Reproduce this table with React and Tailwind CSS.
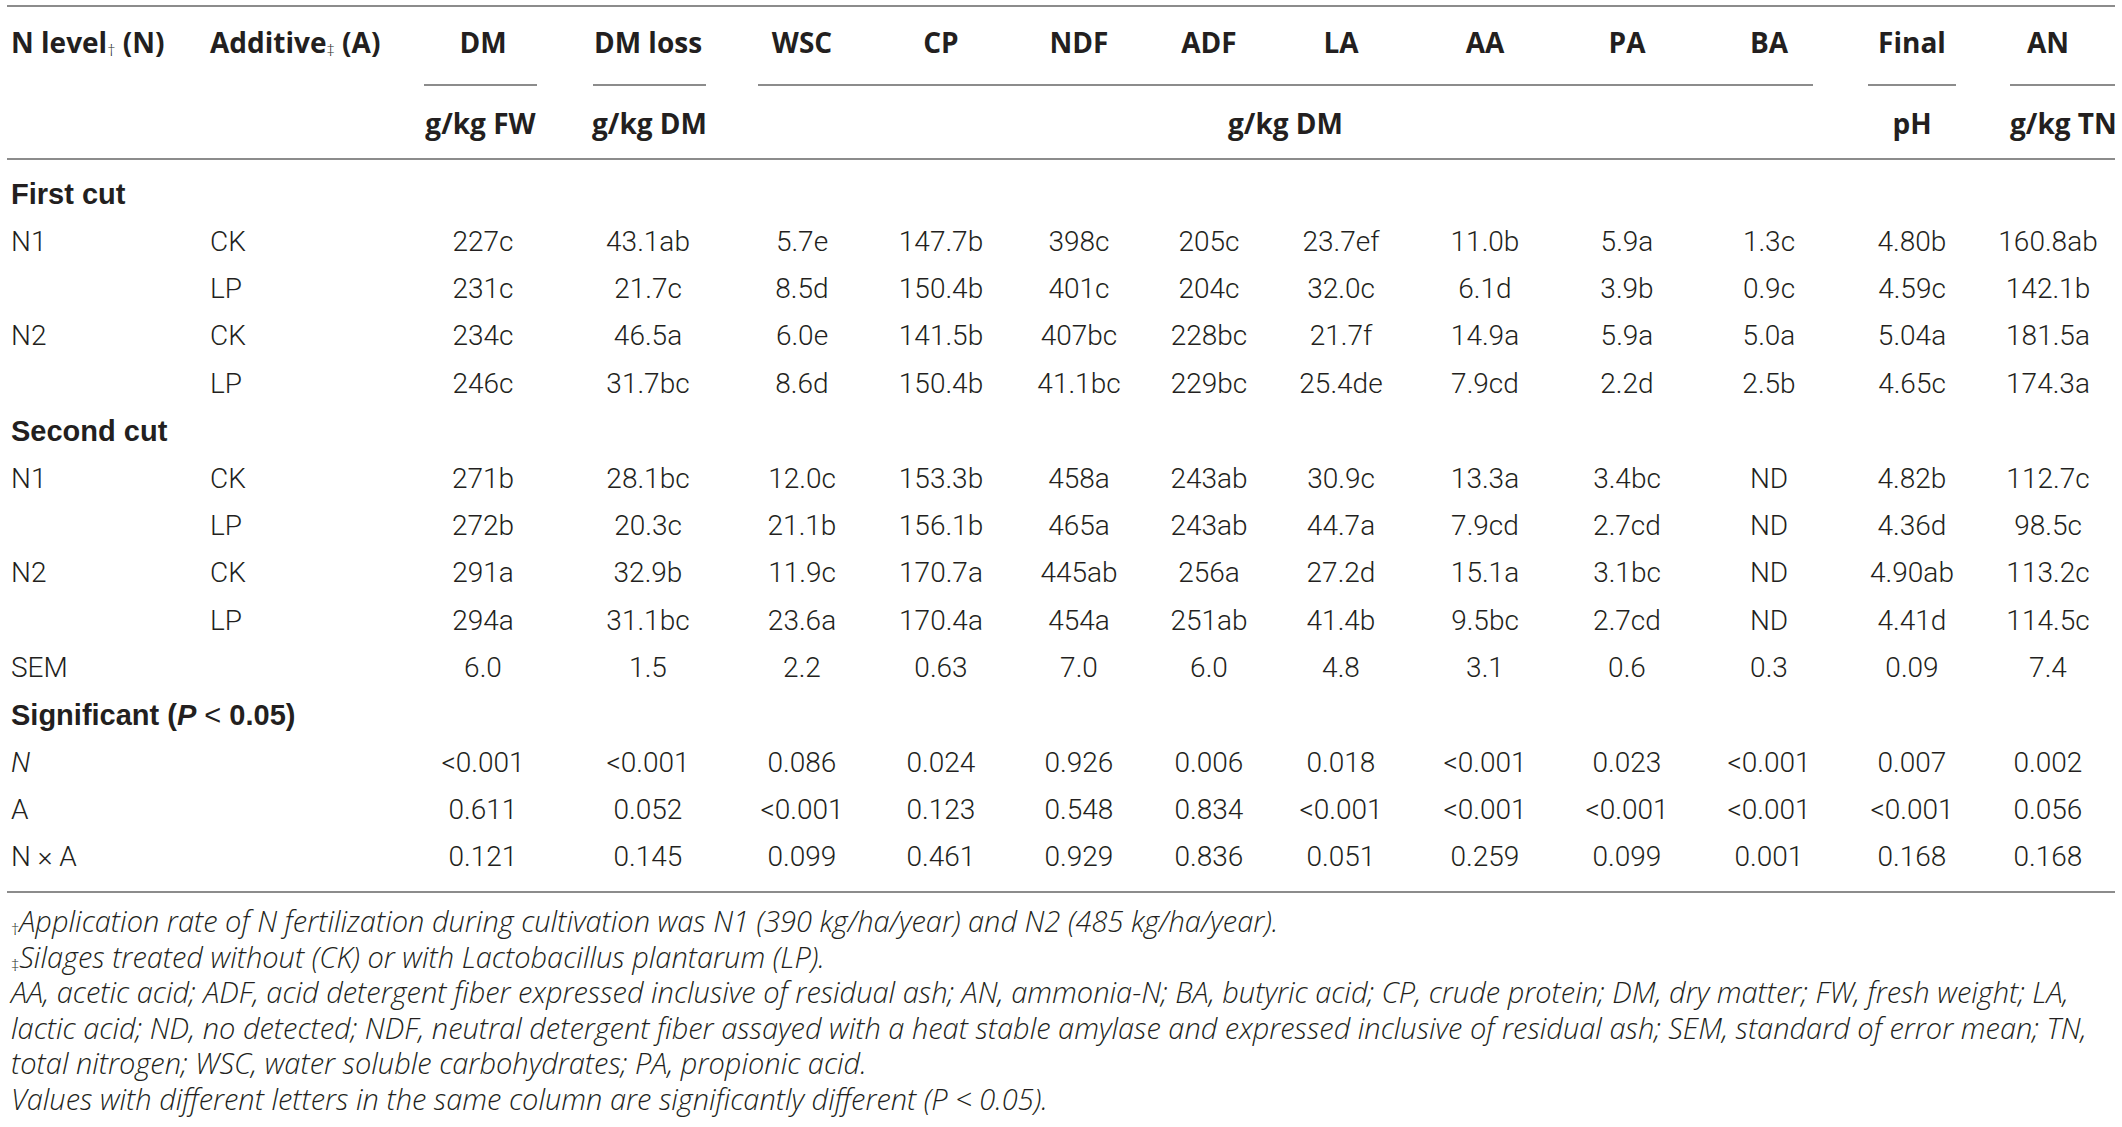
import React from 'react';

const cols = [203, 193, 160, 170, 138, 140, 136, 124, 140, 148, 136, 148, 138, 134];

const heads = ['DM', 'DM loss', 'WSC', 'CP', 'NDF', 'ADF', 'LA', 'AA', 'PA', 'BA', 'Final', 'AN'];

const sections = [
  {
    title: 'First cut',
    rows: [
      ['N1', 'CK', ['227c', '43.1ab', '5.7e', '147.7b', '398c', '205c', '23.7ef', '11.0b', '5.9a', '1.3c', '4.80b', '160.8ab']],
      ['', 'LP', ['231c', '21.7c', '8.5d', '150.4b', '401c', '204c', '32.0c', '6.1d', '3.9b', '0.9c', '4.59c', '142.1b']],
      ['N2', 'CK', ['234c', '46.5a', '6.0e', '141.5b', '407bc', '228bc', '21.7f', '14.9a', '5.9a', '5.0a', '5.04a', '181.5a']],
      ['', 'LP', ['246c', '31.7bc', '8.6d', '150.4b', '41.1bc', '229bc', '25.4de', '7.9cd', '2.2d', '2.5b', '4.65c', '174.3a']],
    ],
  },
  {
    title: 'Second cut',
    rows: [
      ['N1', 'CK', ['271b', '28.1bc', '12.0c', '153.3b', '458a', '243ab', '30.9c', '13.3a', '3.4bc', 'ND', '4.82b', '112.7c']],
      ['', 'LP', ['272b', '20.3c', '21.1b', '156.1b', '465a', '243ab', '44.7a', '7.9cd', '2.7cd', 'ND', '4.36d', '98.5c']],
      ['N2', 'CK', ['291a', '32.9b', '11.9c', '170.7a', '445ab', '256a', '27.2d', '15.1a', '3.1bc', 'ND', '4.90ab', '113.2c']],
      ['', 'LP', ['294a', '31.1bc', '23.6a', '170.4a', '454a', '251ab', '41.4b', '9.5bc', '2.7cd', 'ND', '4.41d', '114.5c']],
      ['SEM', '', ['6.0', '1.5', '2.2', '0.63', '7.0', '6.0', '4.8', '3.1', '0.6', '0.3', '0.09', '7.4']],
    ],
  },
];

const stats = [
  [<i key="n">N</i>, ['<0.001', '<0.001', '0.086', '0.024', '0.926', '0.006', '0.018', '<0.001', '0.023', '<0.001', '0.007', '0.002']],
  ['A', ['0.611', '0.052', '<0.001', '0.123', '0.548', '0.834', '<0.001', '<0.001', '<0.001', '<0.001', '<0.001', '0.056']],
  ['N × A', ['0.121', '0.145', '0.099', '0.461', '0.929', '0.836', '0.051', '0.259', '0.099', '0.001', '0.168', '0.168']],
];

const Dag = ({ c }) => <span className="text-[17px] leading-none relative top-[3px] font-light not-italic">{c}</span>;

const SectionRow = ({ children, first }) => (
  <tr className={first ? 'h-[59px]' : 'h-[47.4px]'}>
    <td colSpan={14} className={'pl-[4px] text-left align-middle font-bold text-[29px] font-["Liberation_Sans",sans-serif] ' + (first ? 'pt-[12px]' : '')}>
      {children}
    </td>
  </tr>
);

const DataRow = ({ a, b, vals, last }) => (
  <tr className={last ? 'h-[58.4px]' : 'h-[47.4px]'}>
    <td className={'pl-[4px] text-left ' + (last ? 'pb-[11px]' : '')}>{a}</td>
    <td className={'text-left ' + (last ? 'pb-[11px]' : '')}>{b}</td>
    {vals.map((v, i) => (
      <td key={i} className={'text-center whitespace-nowrap ' + (last ? 'pb-[11px]' : '')}>{v}</td>
    ))}
  </tr>
);

const Rule = ({ className, children }) => (
  <div className={'border-t-2 border-[#8c8c8c] pt-[16px] whitespace-nowrap ' + className}>{children}</div>
);

export default function App() {
  return (
    <div className="w-[2122px] h-[1127px] bg-white pl-[7px] pt-[5px] text-[#231f20] font-['Roboto',sans-serif] font-light text-[28px]">
      <table className="table-fixed border-collapse w-[2108px]">
        <colgroup>
          {cols.map((w, i) => <col key={i} style={{ width: w }} />)}
        </colgroup>
        <thead className="font-['Open_Sans',sans-serif] text-[28px]">
          <tr className="h-[78px] border-t-2 border-[#8c8c8c] align-middle">
            <th className="pl-[4px] text-left pb-[8px] font-bold whitespace-nowrap">N level<Dag c="†" /> (N)</th>
            <th className="text-left pb-[8px] font-bold whitespace-nowrap">Additive<Dag c="‡" /> (A)</th>
            {heads.map((h) => (
              <th key={h} className="text-center pb-[8px] font-bold whitespace-nowrap">{h}</th>
            ))}
          </tr>
          <tr className="h-[75px] border-b-2 border-[#8c8c8c] align-top">
            <th></th>
            <th></th>
            <th className="font-bold"><Rule className="ml-[21px] mr-[26px]"><span className="-mx-[14px]">g/kg FW</span></Rule></th>
            <th className="font-bold"><Rule className="ml-[30px] mr-[27px]"><span className="-mx-[14px]">g/kg DM</span></Rule></th>
            <th colSpan={8} className="font-bold"><Rule className="ml-[25px] mr-[30px]">g/kg DM</Rule></th>
            <th className="font-bold"><Rule className="ml-[25px] mr-[25px]">pH</Rule></th>
            <th className="font-bold"><Rule className="ml-[29px] mr-0">g/kg TN</Rule></th>
          </tr>
        </thead>
        <tbody className="border-b-2 border-[#8c8c8c]">
          {sections.map((s, si) => (
            <React.Fragment key={s.title}>
              <SectionRow first={si === 0}>{s.title}</SectionRow>
              {s.rows.map((r, ri) => (
                <DataRow key={ri} a={r[0]} b={r[1]} vals={r[2]} />
              ))}
            </React.Fragment>
          ))}
          <SectionRow>Significant (<i>P</i> <span className="font-normal">&lt;</span> 0.05)</SectionRow>
          {stats.map((r, ri) => (
            <DataRow key={ri} a={r[0]} b="" vals={r[1]} last={ri === stats.length - 1} />
          ))}
        </tbody>
      </table>

      <div className="mt-[10px] pl-[4px] w-[2110px] font-['Open_Sans',sans-serif] italic font-light text-[29px] leading-[35.5px] whitespace-nowrap">
        <p><Dag c="†" />Application rate of N fertilization during cultivation was N1 (390 kg/ha/year) and N2 (485 kg/ha/year).</p>
        <p><Dag c="‡" />Silages treated without (CK) or with Lactobacillus plantarum (LP).</p>
        <p>AA, acetic acid; ADF, acid detergent fiber expressed inclusive of residual ash; AN, ammonia-N; BA, butyric acid; CP, crude protein; DM, dry matter; FW, fresh weight; LA,</p>
        <p>lactic acid; ND, no detected; NDF, neutral detergent fiber assayed with a heat stable amylase and expressed inclusive of residual ash; SEM, standard of error mean; TN,</p>
        <p>total nitrogen; WSC, water soluble carbohydrates; PA, propionic acid.</p>
        <p>Values with different letters in the same column are significantly different (P &lt; 0.05).</p>
      </div>
    </div>
  );
}
